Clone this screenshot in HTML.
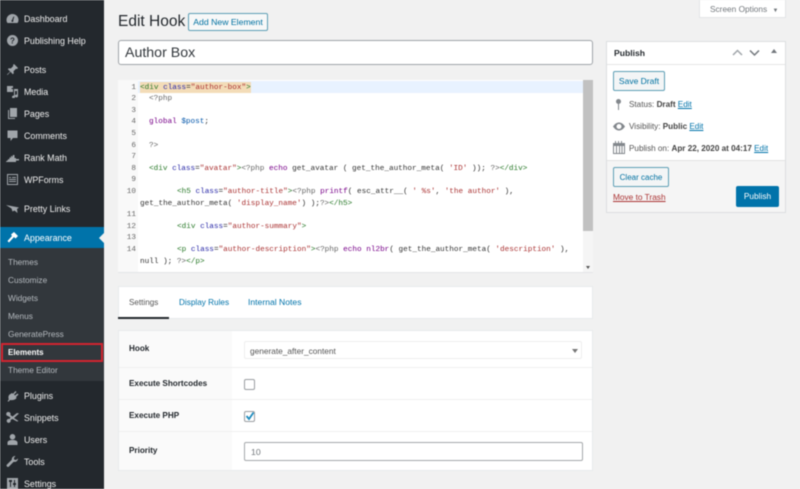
<!DOCTYPE html>
<html><head><meta charset="utf-8">
<style>
*{box-sizing:border-box}
html,body{margin:0;padding:0}
body{width:800px;height:489px;overflow:hidden;background:#f1f1f1;font-family:"Liberation Sans",sans-serif;font-size:9px;color:#444}
#w{position:absolute;left:0;top:0;width:800px;height:489px;overflow:hidden;background:#f1f1f1;filter:blur(.45px)}
.a{position:absolute;white-space:nowrap}
#side{left:0;top:0;width:104px;height:489px;background:#23282d}
#sub{left:0;top:248px;width:104px;height:133px;background:#32373c}
#act{left:0;top:227px;width:104px;height:21px;background:#0073aa}
.m{left:24px;color:#eee;font-size:8.9px;line-height:12px;height:12px}
.s{left:8px;color:#b4b9be;font-size:8.3px;line-height:12px;height:12px}
.i{left:6px;width:13px;height:13px;fill:#a0a5aa}
.code{font-family:"Liberation Mono",monospace;font-size:7.7px;line-height:12px;height:12px;left:140px;color:#333}
.n{font-family:"Liberation Mono",monospace;font-size:7.7px;line-height:12px;height:12px;color:#666;width:24px;left:112px;text-align:right}
.t{color:#2a7a2a}.at{color:#2a2aa8}.st{color:#a33}.k{color:#708}.v{color:#05a}.p{color:#666}
.lnk{color:#0073aa;text-decoration:underline}
.btn{border:1px solid #5e9fb5;border-radius:2px;background:#f3f5f6;color:#0071a1;text-align:center;font-size:8.2px}
.lab{left:129px;font-weight:bold;font-size:8.15px;color:#23282d;line-height:12px}
.line{left:119px;width:473px;height:1px;background:#f0f0f0}
.pl{left:629px;font-size:8.15px;line-height:12px;color:#555}
</style></head><body><div id="w">

<div class="a" id="side"></div>
<div class="a" id="sub"></div>
<div class="a" id="act"></div>

<svg class="a i" style="top:12px" viewBox="0 0 13 13"><path d="M6.500 2a6 6 0 0 0-6 6c0 1.300.4 2.300 1 3h10c.6-.7 1-1.700 1-3a6 6 0 0 0-6-6zM6 8l1.500-3.500.8.300L7.200 8.300A1 1 0 1 1 6 8z"/></svg>
<div class="a m" style="top:13px">Dashboard</div>
<svg class="a i" style="top:34px" viewBox="0 0 13 13"><circle cx="6.500" cy="6.500" r="5.500"/><text x="6.500" y="9.500" font-size="8" font-weight="bold" text-anchor="middle" fill="#23282d" font-family="Liberation Sans">?</text></svg>
<div class="a m" style="top:35px">Publishing Help</div>

<svg class="a i" style="top:63px" viewBox="0 0 13 13"><path d="M8 1l4 4-1 1-1-.3-2.500 2.500.3 2-1 1-2.300-2.400L1.500 12 1 11.500l3.200-3L1.800 6.200l1-1 2 .3L7.300 3 7 2z"/></svg>
<div class="a m" style="top:64px">Posts</div>
<svg class="a i" style="top:85px" viewBox="0 0 13 13"><path d="M1 1h6v2H5.500v1H7v3H1zM8 4h4v7a1.500 1.500 0 1 1-1-1.400V6H9v6a1.500 1.500 0 1 1-1-1.400z"/></svg>
<div class="a m" style="top:86px">Media</div>
<svg class="a i" style="top:107px" viewBox="0 0 13 13"><path d="M4 1h7v9H4zM2 3h1v8h6v1H2z"/></svg>
<div class="a m" style="top:108px">Pages</div>
<svg class="a i" style="top:129px" viewBox="0 0 13 13"><path d="M1.500 1.500h10v7.500H7l-2.500 3V9h-3z"/></svg>
<div class="a m" style="top:130px">Comments</div>
<svg class="a i" style="top:151px" viewBox="0 0 13 13"><path d="M0 10.500l2-1.500V8l1 .5L4 6l1 1V5h1v1.500L7 4h1.500v3H10v1h3v1.500h-3V11H0z"/></svg>
<div class="a m" style="top:152px">Rank Math</div>
<svg class="a i" style="top:173px" viewBox="0 0 13 13"><path fill-rule="evenodd" d="M1 1h11v11H1zM2 2v9h9V2zM3 4h2v1H3zM6 4h4v1H6zM3 6h7v1H3zM3 8h7v1H3z"/></svg>
<div class="a m" style="top:174px">WPForms</div>
<svg class="a i" style="top:202px" viewBox="0 0 13 13"><path d="M0 3l13 2.500-2 1.500.5 4-3-2.500-2 1-1-3z"/></svg>
<div class="a m" style="top:203px">Pretty Links</div>
<svg class="a i" style="top:231px;fill:#fff" viewBox="0 0 13 13"><path d="M8 1l4 4-2.500 2.500L8 6 3 11.500 1.500 10 6 5 5 3.500z"/></svg>
<div class="a m" style="top:232px;color:#fff">Appearance</div>
<div class="a" style="left:99px;top:233px;width:0;height:0;border:5px solid transparent;border-right-color:#f1f1f1;border-left:0"></div>

<div class="a s" style="top:256px">Themes</div>
<div class="a s" style="top:274px">Customize</div>
<div class="a s" style="top:292px">Widgets</div>
<div class="a s" style="top:310px">Menus</div>
<div class="a s" style="top:328px">GeneratePress</div>
<div class="a s" style="top:347px;color:#fff;font-weight:bold;font-size:8px">Elements</div>
<div class="a s" style="top:364px">Theme Editor</div>
<div class="a" style="left:1px;top:343px;width:102px;height:19px;border:2px solid #d2232f"></div>

<svg class="a i" style="top:389px" viewBox="0 0 13 13"><path d="M1.500 12.500l1.300-2.300C2 8 2.500 6 4.500 5L6 4l1 .8L9.500 2l1 1L8 5.500l1 1 2.500-2 1 1L10 8l.6 1C9 11 6.500 11.500 4 11l-1.200 1.500z"/></svg>
<div class="a m" style="top:390px">Plugins</div>
<svg class="a i" style="top:411px" viewBox="0 0 13 13"><path d="M2.500 1a2 2 0 0 1 1.800 3L6.500 5.500 11 2l2 .5-5 4.500 4.500 3-1.500.5L6.500 8 4.500 9a2 2 0 1 1-1-1l1-1.500L2 5a2 2 0 0 1 .5-4z"/></svg>
<div class="a m" style="top:412px">Snippets</div>
<svg class="a i" style="top:433px" viewBox="0 0 13 13"><circle cx="6.500" cy="3.800" r="2.800"/><path d="M1.500 12V9.500c0-1.500 2-2.500 5-2.500s5 1 5 2.500V12z"/></svg>
<div class="a m" style="top:434px">Users</div>
<svg class="a i" style="top:455px" viewBox="0 0 13 13"><path d="M12 3.500a3.300 3.300 0 0 1-4.300 3.200L3 11.500a1.400 1.400 0 0 1-2-2l4.800-4.700A3.300 3.300 0 0 1 9.500 1L7.800 3l.5 1.700L10 5z"/></svg>
<div class="a m" style="top:456px">Tools</div>
<svg class="a i" style="top:477px" viewBox="0 0 13 13"><path fill-rule="evenodd" d="M1 1h11v11H1zM3 3v2h1v5h1V5h1V3zM8 3v3H7v2h1v2h1V8h1V6H9V3z"/></svg>
<div class="a m" style="top:478px">Settings</div>

<!-- header -->
<div class="a" style="left:118px;top:12px;font-size:15.500px;line-height:20px;color:#23282d">Edit Hook</div>
<div class="a btn" style="left:188px;top:13px;width:80px;height:18px;line-height:16px;font-size:8.700px;background:#f7f8f8">Add New Element</div>
<div class="a" style="left:699px;top:-4px;width:87px;height:22px;background:#fff;border:1px solid #e3e5e7;color:#72777c;font-size:8.300px;line-height:25px;padding-left:10px">Screen Options <span style="font-size:6px;margin-left:3px">&#9660;</span></div>

<div class="a" style="left:118px;top:40px;width:475px;height:25px;background:#fff;border:1px solid #a0a4a8;border-radius:3px;font-size:14.200px;line-height:25px;padding-left:6px;color:#32373c">Author Box</div>

<!-- editor -->
<div class="a" style="left:118px;top:80px;width:475px;height:193px;background:#fff;border-bottom:1px solid #e3e5e7;overflow:hidden">
  <div class="a" style="left:0;top:0;width:20px;height:193px;background:#f9f9f9"></div>
  <div class="a" style="left:20px;top:1px;width:445px;height:12px;background:#e8f2ff"></div>
  <div class="a" style="left:22px;top:2px;width:111px;height:11px;background:#f3dcb8"></div>
  <div class="a" style="left:465px;top:0;width:10px;height:193px;background:#f5f5f5"></div>
  <div class="a" style="left:465px;top:0;width:10px;height:151px;background:#c1c1c1"></div>
  <div class="a" style="left:468px;top:186px;width:0;height:0;border:2.500px solid transparent;border-top:3px solid #555;border-bottom:0"></div>
</div>

<div class="a n" style="top:82px">1</div>
<div class="a n" style="top:93px">2</div>
<div class="a n" style="top:105px">3</div>
<div class="a n" style="top:116px">4</div>
<div class="a n" style="top:128px">5</div>
<div class="a n" style="top:140px">6</div>
<div class="a n" style="top:151px">7</div>
<div class="a n" style="top:163px">8</div>
<div class="a n" style="top:174px">9</div>
<div class="a n" style="top:186px">10</div>
<div class="a n" style="top:209px">11</div>
<div class="a n" style="top:221px">12</div>
<div class="a n" style="top:232px">13</div>
<div class="a n" style="top:244px">14</div>

<div class="a code" style="top:82px"><span class="t">&lt;div</span> <span class="at">class</span>=<span class="st">"author-box"</span><span class="t">&gt;</span></div>
<div class="a code" style="top:93px"><span class="p" style="margin-left:9px">&lt;?php</span></div>
<div class="a code" style="top:116px"><span style="margin-left:9px" class="k">global</span> <span class="v">$post</span>;</div>
<div class="a code" style="top:140px"><span class="p" style="margin-left:9px">?&gt;</span></div>
<div class="a code" style="top:163px"><span style="margin-left:9px" class="t">&lt;div</span> <span class="at">class</span>=<span class="st">"avatar"</span><span class="t">&gt;</span><span class="p">&lt;?php</span> <span class="k">echo</span> get_avatar ( get_the_author_meta( <span class="st">'ID'</span> )); <span class="p">?&gt;</span><span class="t">&lt;/div&gt;</span></div>
<div class="a code" style="top:186px"><span style="margin-left:37px" class="t">&lt;h5</span> <span class="at">class</span>=<span class="st">"author-title"</span><span class="t">&gt;</span><span class="p">&lt;?php</span> <span class="k">printf</span>( esc_attr__( <span class="st">' %s'</span>, <span class="st">'the author'</span> ),</div>
<div class="a code" style="top:198px">get_the_author_meta( <span class="st">'display_name'</span>) );<span class="p">?&gt;</span><span class="t">&lt;/h5&gt;</span></div>
<div class="a code" style="top:221px"><span style="margin-left:37px" class="t">&lt;div</span> <span class="at">class</span>=<span class="st">"author-summary"</span><span class="t">&gt;</span></div>
<div class="a code" style="top:244px"><span style="margin-left:37px" class="t">&lt;p</span> <span class="at">class</span>=<span class="st">"author-description"</span><span class="t">&gt;</span><span class="p">&lt;?php</span> <span class="k">echo</span> <span class="k">nl2br</span>( get_the_author_meta( <span class="st">'description'</span> ),</div>
<div class="a code" style="top:256px">null ); <span class="p">?&gt;</span><span class="t">&lt;/p&gt;</span></div>

<!-- tabs -->
<div class="a" style="left:118px;top:286px;width:475px;height:33px;background:#fff;border:1px solid #e8eaec"></div>
<div class="a" style="left:129px;top:297px;font-size:8.100px;line-height:12px;color:#555">Settings</div>
<div class="a" style="left:179px;top:297px;font-size:8.200px;line-height:12px;color:#0073aa">Display Rules</div>
<div class="a" style="left:248px;top:296px;font-size:8.600px;line-height:12px;color:#0073aa">Internal Notes</div>
<div class="a" style="left:118px;top:317px;width:51px;height:2px;background:#23282d"></div>

<!-- settings -->
<div class="a" style="left:118px;top:330px;width:475px;height:141px;background:#fff;border:1px solid #e8eaec"></div>
<div class="a" style="left:119px;top:331px;width:113px;height:139px;background:#fafafa"></div>
<div class="a line" style="top:367px"></div>
<div class="a line" style="top:399px"></div>
<div class="a line" style="top:431px"></div>
<div class="a lab" style="top:343px">Hook</div>
<div class="a lab" style="top:378px">Execute Shortcodes</div>
<div class="a lab" style="top:410px">Execute PHP</div>
<div class="a lab" style="top:445px">Priority</div>

<div class="a" style="left:244px;top:341px;width:338px;height:18px;background:#fff;border:1px solid #eee;border-radius:2px;font-size:8.300px;line-height:18px;padding-left:5px;color:#555">generate_after_content</div>
<div class="a" style="left:572px;top:349px;width:0;height:0;border:3px solid transparent;border-top:4px solid #777;border-bottom:0"></div>

<div class="a" style="left:244px;top:379px;width:11px;height:11px;background:#fff;border:1px solid #9a9da1;border-radius:2px"></div>
<div class="a" style="left:244px;top:411px;width:11px;height:11px;background:#fff;border:1px solid #9a9da1;border-radius:2px"></div>
<svg class="a" style="left:245px;top:411px" width="10" height="10" viewBox="0 0 10 10"><path d="M1.500 5l2.500 3L8.500 1.500" fill="none" stroke="#1e8cbe" stroke-width="1.800"/></svg>

<div class="a" style="left:244px;top:442px;width:339px;height:19px;background:#fff;border:1px solid #a5a8ab;border-radius:2px;font-size:8.700px;line-height:18px;padding-left:6px;color:#72777c">10</div>

<!-- publish -->
<div class="a" style="left:606px;top:41px;width:180px;height:172px;background:#fff;border:1px solid #dcdee0"></div>
<div class="a" style="left:607px;top:64px;width:178px;height:1px;background:#e6e6e6"></div>
<div class="a" style="left:614px;top:47px;font-size:8.600px;font-weight:bold;line-height:12px;color:#23282d">Publish</div>
<svg class="a" style="left:732px;top:48px" width="30" height="9" viewBox="0 0 30 9"><path d="M1 7l4.500-4.500L10 7" fill="none" stroke="#a0a5aa" stroke-width="1.500"/><path d="M18 2.500L22.500 7 27 2.500" fill="none" stroke="#72777c" stroke-width="1.500"/></svg>
<div class="a" style="left:771px;top:49px;width:0;height:0;border:3px solid transparent;border-bottom:4px solid #72777c;border-top:0"></div>

<div class="a btn" style="left:613px;top:71px;width:52px;height:20px;line-height:18px;font-size:8.500px">Save Draft</div>

<svg class="a" style="left:613px;top:98px" width="11" height="13" viewBox="0 0 11 13"><circle cx="5.500" cy="3.500" r="2.500" fill="#82878c"/><path d="M5 5h1v7H5z" fill="#82878c"/></svg>
<div class="a pl" style="top:99px">Status: <b style="color:#444">Draft</b> <span class="lnk">Edit</span></div>
<svg class="a" style="left:612px;top:121px" width="14" height="11" viewBox="0 0 14 11"><path fill="#82878c" fill-rule="evenodd" d="M1 5.500C3 2.500 5 1.500 7 1.500s4 1 6 4c-2 3-4 4-6 4s-4-1-6-4zM7 3a2.500 2.500 0 1 0 0 5 2.500 2.500 0 0 0 0-5z"/></svg>
<div class="a pl" style="top:121px">Visibility: <b style="color:#444">Public</b> <span class="lnk">Edit</span></div>
<svg class="a" style="left:613px;top:141px" width="12" height="13" viewBox="0 0 12 13"><path fill="#82878c" fill-rule="evenodd" d="M0 2h2V0h1v2h2V0h1v2h2V0h1v2h3v11H0zM1 5v7h2V5zM4 5v7h2V5zM7 5v7h1.500V5zM9.500 5v7H11V5z"/></svg>
<div class="a pl" style="top:143px">Publish on: <b style="color:#444">Apr 22, 2020 at 04:17</b> <span class="lnk">Edit</span></div>

<div class="a" style="left:607px;top:160px;width:178px;height:52px;background:#f5f5f5;border-top:1px solid #e3e3e3"></div>
<div class="a btn" style="left:613px;top:167px;width:56px;height:20px;line-height:20px;font-size:8px">Clear cache</div>
<div class="a" style="left:613px;top:191px;font-size:8.300px;line-height:12px;color:#a33;text-decoration:underline">Move to Trash</div>
<div class="a" style="left:736px;top:186px;width:43px;height:21px;background:#0073aa;border-radius:2px;color:#fff;text-align:center;font-size:8.300px;line-height:21px">Publish</div>

</div></body></html>
